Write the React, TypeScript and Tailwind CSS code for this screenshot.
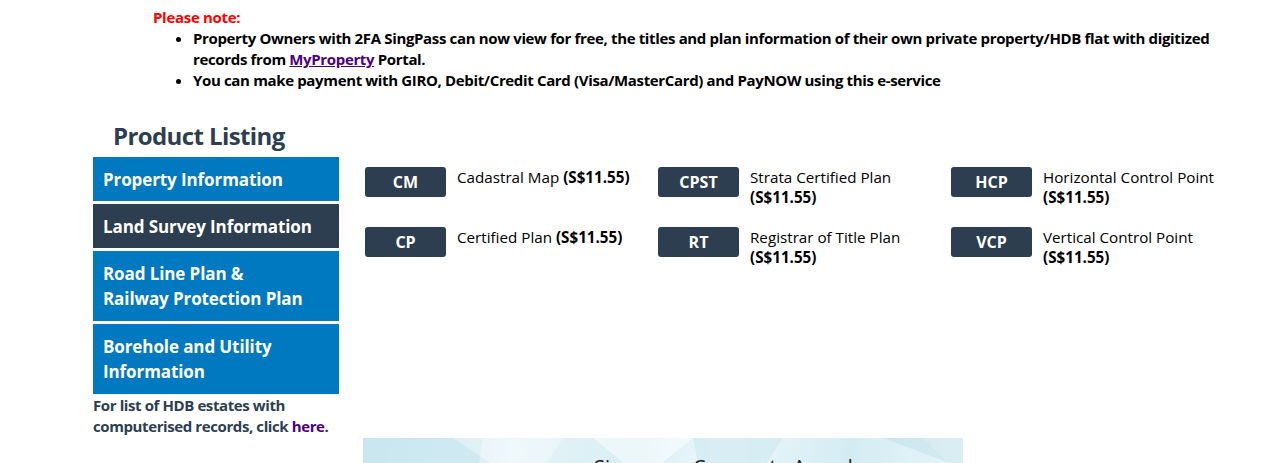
import React from "react";

const items = [
  { code: "CM", name: "Cadastral Map", inline: true },
  { code: "CPST", name: "Strata Certified Plan", inline: false },
  { code: "HCP", name: "Horizontal Control Point", inline: false },
  { code: "CP", name: "Certified Plan", inline: true },
  { code: "RT", name: "Registrar of Title Plan", inline: false },
  { code: "VCP", name: "Vertical Control Point", inline: false },
];

export default function App() {
  return (
    <div className="w-[1261px] h-[463px] overflow-hidden bg-white text-black font-['Open_Sans','Noto_Sans',sans-serif]">
      <div className="pl-[153px] pt-[7px]">
        <p className="text-[#ff0000] font-bold text-[15px] leading-[21px] tracking-[-0.3px]">Please note:</p>
        <ul className="list-disc pl-[40px] font-bold text-[15px] leading-[21px] tracking-[-0.35px] pr-[40px]">
          <li>
            Property Owners with 2FA SingPass can now view for free, the titles and plan information of their own private property/HDB flat with digitized records from{" "}
            <a className="text-[#4b0082] underline">MyProperty</a>{" "}Portal.
          </li>
          <li>You can make payment with GIRO, Debit/Credit Card (Visa/MasterCard) and PayNOW using this e-service</li>
        </ul>
      </div>

      <div className="flex pl-[93px] mt-[29px]">
        <div className="w-[246px] shrink-0">
          <h2 className="pl-[20px] text-[24px] leading-[32px] font-bold text-[#2c3e50] tracking-[-0.6px]">Product Listing</h2>
          <div className="mt-[5px] flex flex-col gap-[3px] text-white font-bold text-[17px] leading-[25px] tracking-[-0.1px]">
            <div className="bg-[#0079c1] h-[44px] px-[10px] flex items-center">Property Information</div>
            <div className="bg-[#2c3e50] h-[44px] px-[10px] flex items-center">Land Survey Information</div>
            <div className="bg-[#0079c1] h-[70px] px-[10px] flex flex-col justify-center">
              <span>Road Line Plan &amp;</span>
              <span>Railway Protection Plan</span>
            </div>
            <div className="bg-[#0079c1] h-[70px] px-[10px] flex flex-col justify-center">
              <span>Borehole and Utility</span>
              <span>Information</span>
            </div>
          </div>
          <p className="mt-[1px] text-[15px] leading-[21px] font-bold text-[#2c3e50] tracking-[-0.4px]">
            For list of HDB estates with computerised records, click <a className="text-[#4b0082]">here</a>.
          </p>
        </div>

        <div className="flex flex-col ml-[24px]">
          <div className="grid grid-cols-[293px_293px_293px] gap-y-[20px] mt-[47px] ml-[2px]">
            {items.map((it) => (
              <div key={it.code} className="flex items-start gap-[11px]">
                <div className="w-[81px] h-[30px] shrink-0 rounded-[3px] bg-[#2c3e50] text-white font-bold text-[16px] flex items-center justify-center">
                  {it.code}
                </div>
                <div className="text-[15.2px] leading-[20px]">
                  {it.name}
                  {it.inline ? " " : <br />}
                  <span className="font-bold">(S$11.55)</span>
                </div>
              </div>
            ))}
          </div>
          <div className="mt-[171px] w-[600px] h-[60px] relative overflow-hidden bg-[linear-gradient(100deg,#cfe9f1_0%,#e6f4f8_25%,#d8eef4_45%,#eef8fb_60%,#d3ecf3_80%,#e9f6f9_100%)]">
            <svg className="absolute inset-0" width="600" height="60" viewBox="0 0 600 60">
              <polygon points="0,0 90,0 150,40 0,30" fill="#c4e4ee" opacity="0.6" />
              <polygon points="120,0 200,0 160,60 110,60" fill="#ffffff" opacity="0.35" />
              <polygon points="230,0 330,0 280,40" fill="#ffffff" opacity="0.5" />
              <polygon points="330,0 420,0 380,60 340,50" fill="#cbe8f0" opacity="0.6" />
              <polygon points="470,0 560,0 600,40 600,0" fill="#ffffff" opacity="0.5" />
              <polygon points="520,0 600,0 600,30" fill="#bfe0ea" opacity="0.5" />
            </svg>
            <div className="absolute left-[231px] top-[17px] text-[20px] leading-[24px] text-[#1a1a1a] whitespace-nowrap">
              Singapore Corporate Awards
            </div>
          </div>
        </div>
      </div>
    </div>
  );
}
